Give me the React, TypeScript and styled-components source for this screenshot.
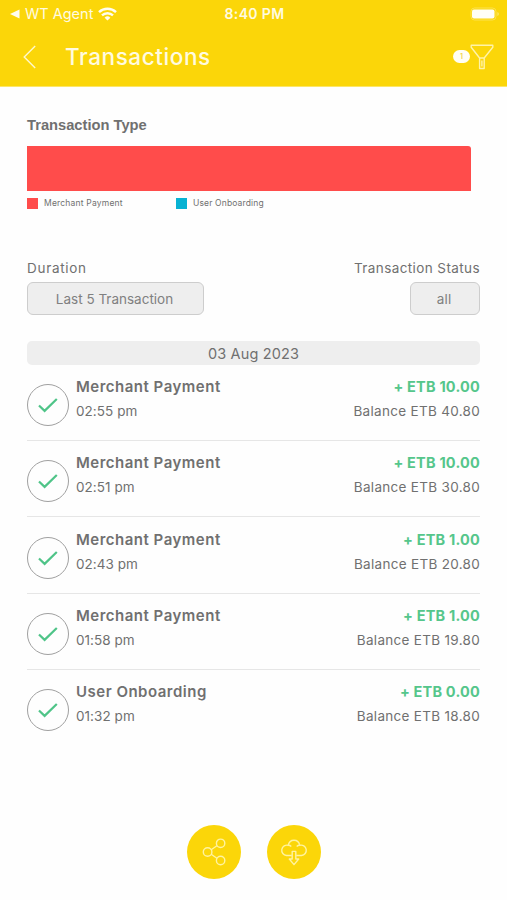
import React from "react";
import styled, { createGlobalStyle } from "styled-components";

const yellow = "#fbd609";

const GlobalStyle = createGlobalStyle`
  * { box-sizing: border-box; }
  body { margin: 0; background: #fefefe; }
`;

const Screen = styled.main`
  width: 507px;
  height: 900px;
  display: flex;
  flex-direction: column;
  overflow: hidden;
  background: #fefefe;
  color: #707070;
  font-family: Inter, "Liberation Sans", sans-serif;
  white-space: nowrap;
`;

const Text = styled.span<{ $size: number; $track?: number; $weight?: number; $color?: string; $line?: number }>`
  display: block;
  font-size: ${(p) => p.$size}px;
  letter-spacing: ${(p) => p.$track ?? 0}px;
  font-weight: ${(p) => p.$weight ?? 400};
  color: ${(p) => p.$color ?? "inherit"};
  line-height: ${(p) => (p.$line ? `${p.$line}px` : "normal")};
`;

const Header = styled.header`
  height: 87px;
  flex: none;
  background: ${yellow};
  border-bottom: 1px solid #fce668;
  color: #fffbe0;
`;

const StatusBar = styled.div`
  height: 27px;
  display: grid;
  grid-template-columns: 1fr auto 1fr;
  align-items: center;
  padding: 0 8px 0 10px;
`;

const StatusLeft = styled.div`
  display: flex;
  align-items: center;
  gap: 5px;
`;

const StatusRight = styled.div`
  display: flex;
  justify-content: flex-end;
`;

const NavBar = styled.div`
  height: 59px;
  display: flex;
  align-items: center;
  padding: 0 13px 0 23px;
`;

const PageTitle = styled.h1`
  margin: 1px auto 0 29px;
  font-size: 22.5px;
  line-height: 30px;
  font-weight: 500;
  letter-spacing: 0.58px;
`;

const FilterCount = styled.span`
  width: 17px;
  height: 13px;
  border-radius: 7px;
  background: #fffef5;
  color: #f1d44c;
  font-size: 7px;
  font-weight: 600;
  line-height: 13px;
  text-align: center;
`;

const Chart = styled.section`
  flex: none;
  height: 172px;
  padding: 28px 36px 0 27px;
`;

const ChartTitle = styled.h2`
  margin: 0;
  font: bold 14.7px/21px "Liberation Sans", Arial, sans-serif;
`;

const ChartBar = styled.div`
  height: 45px;
  margin-top: 10px;
  background: #ff4c4b;
  border-radius: 0 3px 0 0;
`;

const Legend = styled.div`
  display: grid;
  grid-template-columns: 149px auto;
  margin-top: 6px;
`;

const LegendItem = styled.div`
  display: flex;
  align-items: center;
  gap: 6px;
`;

const Swatch = styled.span<{ $color: string }>`
  width: 11px;
  height: 11px;
  background: ${(p) => p.$color};
`;

const Filters = styled.section`
  flex: none;
  height: 82px;
  display: flex;
  justify-content: space-between;
  padding: 0 27px;
`;

const Field = styled.div<{ $end?: boolean }>`
  display: flex;
  flex-direction: column;
  align-items: ${(p) => (p.$end ? "flex-end" : "flex-start")};
  gap: 4px;
`;

const Select = styled.button<{ $width: number }>`
  width: ${(p) => p.$width}px;
  height: 33px;
  padding: 0 2px 0 0;
  display: flex;
  align-items: center;
  justify-content: center;
  border: 1.5px solid #cdcdcd;
  border-radius: 6px;
  background: #eee;
  color: #808080;
  font-family: inherit;
`;

const History = styled.section`
  flex: 1;
  padding: 0 27px;
`;

const DateBar = styled.div`
  height: 24px;
  display: flex;
  align-items: center;
  justify-content: center;
  border-radius: 5px;
  background: #eee;
`;

const Row = styled.article`
  height: 76.2px;
  display: grid;
  grid-template-columns: 42px 1fr auto;
  column-gap: 7px;
  align-items: start;
  padding-top: 10.3px;
  border-bottom: 1.5px solid #e6e6e6;
  &:last-child { border-bottom: 0; }
`;

const StatusIcon = styled.span`
  width: 42px;
  height: 42px;
  margin-top: 9px;
  display: grid;
  place-items: center;
  border: 1.3px solid #a0a0a0;
  border-radius: 50%;
`;

const Amounts = styled.div`
  display: flex;
  flex-direction: column;
  align-items: flex-end;
`;

const Actions = styled.footer`
  flex: none;
  height: 75px;
  display: flex;
  justify-content: center;
  gap: 26px;
`;

const ActionButton = styled.button`
  width: 54px;
  height: 54px;
  padding: 0;
  display: grid;
  place-items: center;
  border: 0;
  border-radius: 50%;
  background: ${yellow};
`;

const WifiIcon = () => (
  <svg width="19" height="14" viewBox="0 0 19 14" fill="none" stroke="#fffdf0" strokeWidth="2.4">
    <path d="M1 5.2a12.3 12.3 0 0 1 17 0M4 8.4a8 8 0 0 1 11 0" />
    <path d="M6.6 10.7a4.2 4.2 0 0 1 5.8 0L9.5 13.5z" fill="#fffdf0" stroke="none" />
  </svg>
);

const BatteryIcon = () => (
  <svg width="30" height="14" viewBox="0 0 30 14">
    <rect x="2" y="1" width="25" height="12" rx="3.5" fill="none" stroke="#fce250" />
    <rect x="3" y="2.5" width="22.5" height="9" rx="2" fill="#fffef8" />
    <path d="M28.5 5v4q1.2-.6 1.2-2t-1.2-2z" fill="#fdeb86" />
  </svg>
);

const FunnelIcon = () => (
  <svg width="24" height="26" viewBox="0 0 24 26" fill="none" stroke="#fff3a8" strokeWidth="1.4" strokeLinejoin="round">
    <path d="M1.2 1.2h21.6v2L14.2 14v10.5H9.6V14L1.2 3.2zM9.6 14h4.6M11.9 16.5v6" />
  </svg>
);

const CheckIcon = () => (
  <svg width="20" height="16" viewBox="0 0 20 16" fill="none" stroke="#4fc488" strokeWidth="2.2">
    <path d="M1 8.5l5.6 5.4L18.8 2" />
  </svg>
);

const ShareIcon = () => (
  <svg width="24" height="28" viewBox="0 0 24 28" fill="none" stroke="#fff3a0" strokeWidth="1.4">
    <circle cx="5.6" cy="14" r="4.3" />
    <circle cx="18.6" cy="5.3" r="4.2" />
    <circle cx="18.6" cy="22.5" r="4.2" />
    <path d="M9.2 11.7l5.7-4M9.2 16.2l5.7 4" />
  </svg>
);

const DownloadIcon = () => (
  <svg width="28" height="28" viewBox="0 0 28 28" fill="none" stroke="#fff3a0" strokeWidth="1.4" strokeLinejoin="round">
    <path d="M11.8 17.5H6.5a5.2 5.2 0 1 1 1.8-10.2C8.8 4.2 11 2.2 14 2.2s5.2 2 5.7 5.1A5.2 5.2 0 1 1 21.5 17.5h-5.3" />
    <path d="M12.2 13.4h3.6v7.6h2.9L14 26.6 9.3 21h2.9zM8.3 7.3c1.2 0 2.2.4 3 1.2M19.7 7.3c-1.2 0-2.2.4-3 1.2" />
  </svg>
);

const transactions = [
  { name: "Merchant Payment", time: "02:55 pm", amount: "+ ETB 10.00", balance: "Balance ETB 40.80" },
  { name: "Merchant Payment", time: "02:51 pm", amount: "+ ETB 10.00", balance: "Balance ETB 30.80" },
  { name: "Merchant Payment", time: "02:43 pm", amount: "+ ETB 1.00", balance: "Balance ETB 20.80" },
  { name: "Merchant Payment", time: "01:58 pm", amount: "+ ETB 1.00", balance: "Balance ETB 19.80" },
  { name: "User Onboarding", time: "01:32 pm", amount: "+ ETB 0.00", balance: "Balance ETB 18.80" },
];

export default function App() {
  return (
    <Screen>
      <GlobalStyle />
      <Header>
        <StatusBar>
          <StatusLeft>
            <svg width="10" height="10" viewBox="0 0 10 10"><path d="M0 5l9.5-4.5v9z" fill="#fffdf0" /></svg>
            <Text $size={14.5}>WT Agent</Text>
            <WifiIcon />
          </StatusLeft>
          <Text $size={14} $track={0.35} $weight={600}>8:40 PM</Text>
          <StatusRight><BatteryIcon /></StatusRight>
        </StatusBar>
        <NavBar>
          <svg width="13" height="24" viewBox="0 0 13 24" fill="none" stroke="#fff8cc" strokeWidth="1.4"><path d="M12.2 1L1.2 12l11 11" /></svg>
          <PageTitle>Transactions</PageTitle>
          <FilterCount>1</FilterCount>
          <FunnelIcon />
        </NavBar>
      </Header>
      <Chart>
        <ChartTitle>Transaction Type</ChartTitle>
        <ChartBar />
        <Legend>
          <LegendItem><Swatch $color="#ff4c4b" /><Text $size={8.5} $line={12} $track={0.2}>Merchant Payment</Text></LegendItem>
          <LegendItem><Swatch $color="#08b2d3" /><Text $size={8.5} $line={12} $track={0.15}>User Onboarding</Text></LegendItem>
        </Legend>
      </Chart>
      <Filters>
        <Field>
          <Text $size={13.5} $line={19} $track={0.7}>Duration</Text>
          <Select $width={177}><Text $size={13.5}>Last 5 Transaction</Text></Select>
        </Field>
        <Field $end>
          <Text $size={13.5} $line={19} $track={0.4}>Transaction Status</Text>
          <Select $width={70}><Text $size={13.5} $track={0.2}>all</Text></Select>
        </Field>
      </Filters>
      <History>
        <DateBar><Text $size={14.5} $track={0.15}>03 Aug 2023</Text></DateBar>
        {transactions.map((t) => (
          <Row key={t.time}>
            <StatusIcon><CheckIcon /></StatusIcon>
            <div>
              <Text $size={15} $line={24} $weight={600} $track={0.5}>{t.name}</Text>
              <Text $size={13.5} $line={24} $track={0.05}>{t.time}</Text>
            </div>
            <Amounts>
              <Text $size={14.5} $line={24} $weight={700} $track={0.2} $color="#55c68b">{t.amount}</Text>
              <Text $size={13.5} $line={24} $track={0.3}>{t.balance}</Text>
            </Amounts>
          </Row>
        ))}
      </History>
      <Actions>
        <ActionButton aria-label="Share"><ShareIcon /></ActionButton>
        <ActionButton aria-label="Download"><DownloadIcon /></ActionButton>
      </Actions>
    </Screen>
  );
}
